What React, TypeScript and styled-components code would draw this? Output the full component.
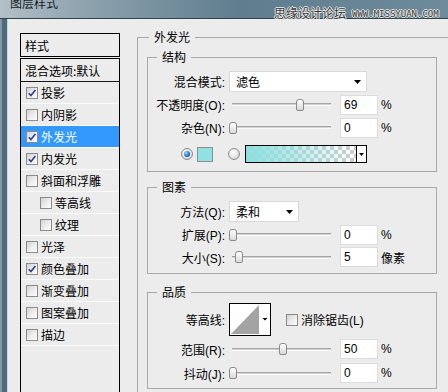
import styled, { createGlobalStyle } from "styled-components";

const GlobalStyle = createGlobalStyle`
  * { box-sizing: border-box; }
  html, body { margin: 0; padding: 0; background: #ececec; }
  body {
    font-family: "Liberation Sans", "Noto Sans CJK SC", sans-serif;
    font-size: 12px;
    color: #000;
  }
`;

const Window = styled.div`
  position: relative;
  width: 448px;
  height: 392px;
  overflow: hidden;
  display: flex;
  flex-direction: column;
  background: #ececec;
`;

const TitleBar = styled.div`
  height: 19px;
  flex-shrink: 0;
  display: flex;
  align-items: flex-start;
  padding-left: 10px;
  border-bottom: 1px solid #33424b;
  background: linear-gradient(
    to right,
    #b3c0c7 0,
    #8fa4af 80px,
    #5f7d8e 240px,
    #6d8b9a 448px
  );
`;

const TitleText = styled.span`
  font-family: "Noto Sans CJK SC", sans-serif;
  font-size: 12px;
  line-height: 12px;
  margin-top: -3px;
  color: #151b1f;
`;

const Watermark = styled.div`
  position: absolute;
  left: 274px;
  top: 6px;
  z-index: 2;
  display: flex;
  align-items: center;
  gap: 6px;
  color: #3a3a3a;
  text-shadow: 1px 0 #e8e8e8, -1px 0 #e8e8e8, 0 1px #e8e8e8, 0 -1px #e8e8e8;
`;

const WatermarkCn = styled.span`
  font-family: "Noto Sans CJK SC", sans-serif;
  font-size: 12px;
  line-height: 14px;
`;

const WatermarkEn = styled.span`
  font-family: "DejaVu Sans Mono", monospace;
  font-size: 9px;
  line-height: 10px;
  margin-top: 2px;
`;

const Body = styled.div`
  flex: 1;
  min-height: 0;
  display: flex;
`;

const FrameEdge = styled.div`
  width: 8px;
  flex-shrink: 0;
  background: linear-gradient(
    to right,
    #8198a4 0 2px,
    #4d6b7f 2px 7px,
    #cfd6da 7px 8px
  );
`;

const Content = styled.div`
  flex: 1;
  display: flex;
  align-items: flex-start;
  padding: 14px 0 0 12px;
`;

/* ---------- left style list ---------- */

const Sidebar = styled.div`
  width: 100px;
  height: 380px;
  flex-shrink: 0;
  display: flex;
  flex-direction: column;
  font-family: "Noto Sans CJK SC", sans-serif;
`;

const SideHeader = styled.div`
  height: 24px;
  margin-bottom: 1px;
  border: 1px solid #000;
  padding-left: 4px;
  display: flex;
  align-items: center;
`;

const StyleList = styled.div`
  flex: 1;
  border: 1px solid #000;
  border-bottom: none;
`;

const BlendRow = styled.div`
  height: 23px;
  padding: 1px 0 0 4px;
  border-bottom: 1px solid #1a1a1a;
  display: flex;
  align-items: center;
`;

const EffectRow = styled.div<{ $selected?: boolean; $sub?: boolean }>`
  height: 22px;
  padding-left: ${(p) => (p.$sub ? 19 : 5)}px;
  border-bottom: 1px solid #fbfbfb;
  display: flex;
  align-items: center;
  gap: 3px;
  background: ${(p) => (p.$selected ? "#3399ff" : "transparent")};
  color: ${(p) => (p.$selected ? "#fff" : "#000")};
`;

const CheckBoxFrame = styled.span`
  width: 12px;
  height: 12px;
  flex-shrink: 0;
  border: 1px solid #8b8b8b;
  background: linear-gradient(135deg, #d2d2d2 0%, #f0f0f0 60%, #fdfdfd 100%);
  display: flex;
  align-items: center;
  justify-content: center;
`;

function CheckBox({ checked }: { checked: boolean }) {
  return (
    <CheckBoxFrame>
      {checked && (
        <svg width="10" height="10" viewBox="0 0 10 10">
          <path
            d="M1.8 5.2 L4 7.6 L8.4 2"
            fill="none"
            stroke="#2f3f93"
            strokeWidth="1.6"
          />
        </svg>
      )}
    </CheckBoxFrame>
  );
}

/* ---------- right panel ---------- */

const Main = styled.div`
  flex-shrink: 0;
  margin: -4px 0 0 17px;
`;

const OuterGroup = styled.fieldset`
  width: 320px;
  margin: 0;
  min-inline-size: 0;
  padding: 4px 0 10px 9px;
  border: 1px solid #a9a9a9;
`;

const OuterLegend = styled.legend`
  margin-left: 2px;
  padding: 0 5px;
  font-family: "Noto Sans CJK SC", sans-serif;
  font-size: 12px;
  line-height: 16px;
`;

const Group = styled.fieldset<{ $top: number; $pt: number; $pb: number }>`
  width: 290px;
  margin: ${(p) => p.$top}px 0 0 0;
  min-inline-size: 0;
  padding: ${(p) => p.$pt}px 0 ${(p) => p.$pb}px 0;
  border: 1px solid #a9a9a9;
`;

const GroupLegend = styled.legend`
  margin-left: 9px;
  padding: 0 5px;
  font-family: "Noto Sans CJK SC", sans-serif;
  font-size: 12px;
  line-height: 16px;
`;

const Row = styled.div<{ $h: number }>`
  height: ${(p) => p.$h}px;
  display: flex;
  align-items: center;
`;

const Label = styled.span`
  width: 77px;
  flex-shrink: 0;
  text-align: right;
  white-space: nowrap;
`;

const SelectBox = styled.div<{ $w: number }>`
  width: ${(p) => p.$w}px;
  height: 21px;
  margin-left: 4px;
  padding: 0 5px 0 6px;
  background: #fff;
  border: 1px solid #d9d9d9;
  display: flex;
  align-items: center;
  justify-content: space-between;
  font-family: "Noto Sans CJK SC", sans-serif;
`;

function Select({ value, width }: { value: string; width: number }) {
  return (
    <SelectBox $w={width}>
      <span>{value}</span>
      <svg width="7" height="4" viewBox="0 0 7 4">
        <path d="M0 0h7L3.5 4z" fill="#000" />
      </svg>
    </SelectBox>
  );
}

const SliderBox = styled.div`
  position: relative;
  width: 105px;
  height: 20px;
  margin-left: 4px;
  flex-shrink: 0;
  display: flex;
  align-items: center;
`;

const Track = styled.div`
  flex: 1;
  margin: 0 3px;
  height: 3px;
  border-top: 1px solid #a3a3a3;
  background: #d2d2d2;
  border-bottom: 1px solid #fafafa;
`;

const Thumb = styled.div`
  position: absolute;
  top: 4px;
  width: 8px;
  height: 12px;
  border: 1px solid #8a8a8a;
  border-radius: 3px 3px 2px 2px;
  background: linear-gradient(#ffffff, #d9d9d9);
`;

function Slider({ pct }: { pct: number }) {
  return (
    <SliderBox>
      <Track />
      <Thumb style={{ left: `${Math.round(pct * 97)}px` }} />
    </SliderBox>
  );
}

const NumberBox = styled.div`
  width: 38px;
  height: 20px;
  margin-left: 6px;
  padding-left: 3px;
  background: #fff;
  border: 1px solid #dcdcdc;
  display: flex;
  align-items: center;
`;

const Unit = styled.span`
  margin-left: 3px;
  white-space: nowrap;
`;

function SliderRow({
  label,
  pct,
  value,
  unit,
  h,
}: {
  label: string;
  pct: number;
  value: string;
  unit: string;
  h: number;
}) {
  return (
    <Row $h={h}>
      <Label>{label}</Label>
      <Slider pct={pct} />
      <NumberBox>{value}</NumberBox>
      <Unit>{unit}</Unit>
    </Row>
  );
}

const ColorRow = styled(Row)`
  padding-left: 33px;
`;

const RadioOuter = styled.span<{ $on?: boolean }>`
  width: 12px;
  height: 12px;
  flex-shrink: 0;
  border-radius: 50%;
  border: 1px solid #8d8d8d;
  background: radial-gradient(circle at 40% 35%, #ffffff 0%, #e6e6e6 50%, #c4c4c4 100%);
  display: flex;
  align-items: center;
  justify-content: center;
  margin-left: ${(p) => (p.$on ? 0 : 15)}px;
`;

const RadioDot = styled.span`
  width: 6px;
  height: 6px;
  border-radius: 50%;
  background: radial-gradient(circle at 35% 35%, #9fdcff 0%, #1777c7 55%, #0b3f75 100%);
`;

const Swatch = styled.span`
  width: 16px;
  height: 15px;
  margin-left: 4px;
  border: 1px solid #8e8e8e;
  background: #90e1e3;
`;

const GradientBar = styled.div`
  width: 122px;
  height: 18px;
  margin-left: 5px;
  border: 1px solid #000;
  display: flex;
`;

const GradientFill = styled.div`
  flex: 1;
  background:
    linear-gradient(to right, #8fdfe0 0%, rgba(143, 223, 224, 0.7) 35%, rgba(143, 223, 224, 0) 100%),
    repeating-conic-gradient(#cdcdcd 0 25%, #ffffff 0 50%) 0 0 / 8px 8px;
`;

const ArrowCell = styled.div`
  width: 10px;
  border-left: 1px solid #000;
  background: #fff;
  display: flex;
  align-items: center;
  justify-content: center;
`;

const ContourBox = styled.div`
  width: 42px;
  height: 33px;
  margin-left: 4px;
  border: 1px solid #000;
  background: #fff;
  display: flex;
`;

const CheckLabel = styled.span`
  display: flex;
  align-items: center;
  gap: 3px;
  margin-left: 15px;
  white-space: nowrap;
`;

const effects = [
  { name: "投影", checked: true },
  { name: "内阴影", checked: false },
  { name: "外发光", checked: true, selected: true },
  { name: "内发光", checked: true },
  { name: "斜面和浮雕", checked: false },
  { name: "等高线", checked: false, sub: true },
  { name: "纹理", checked: false, sub: true },
  { name: "光泽", checked: false },
  { name: "颜色叠加", checked: true },
  { name: "渐变叠加", checked: false },
  { name: "图案叠加", checked: false },
  { name: "描边", checked: false },
];

export default function App() {
  return (
    <>
      <GlobalStyle />
      <Window>
        <TitleBar>
          <TitleText>图层样式</TitleText>
        </TitleBar>
        <Watermark>
          <WatermarkCn>思缘设计论坛</WatermarkCn>
          <WatermarkEn>WWW.MISSYUAN.COM</WatermarkEn>
        </Watermark>
        <Body>
          <FrameEdge />
          <Content>
            <Sidebar>
              <SideHeader>样式</SideHeader>
              <StyleList>
                <BlendRow>混合选项:默认</BlendRow>
                {effects.map((e) => (
                  <EffectRow key={e.name} $selected={e.selected} $sub={e.sub}>
                    <CheckBox checked={e.checked} />
                    {e.name}
                  </EffectRow>
                ))}
              </StyleList>
            </Sidebar>

            <Main>
              <OuterGroup>
                <OuterLegend>外发光</OuterLegend>

                <Group $top={0} $pt={5} $pb={2}>
                  <GroupLegend>结构</GroupLegend>
                  <Row $h={23}>
                    <Label>混合模式:</Label>
                    <Select value="滤色" width={138} />
                  </Row>
                  <SliderRow h={23} label="不透明度(O):" pct={0.69} value="69" unit="%" />
                  <SliderRow h={23} label="杂色(N):" pct={0} value="0" unit="%" />
                  <ColorRow $h={30}>
                    <RadioOuter $on>
                      <RadioDot />
                    </RadioOuter>
                    <Swatch />
                    <RadioOuter />
                    <GradientBar>
                      <GradientFill />
                      <ArrowCell>
                        <svg width="5" height="3" viewBox="0 0 5 3">
                          <path d="M0 0h5L2.5 3z" fill="#000" />
                        </svg>
                      </ArrowCell>
                    </GradientBar>
                  </ColorRow>
                </Group>

                <Group $top={7} $pt={5} $pb={5}>
                  <GroupLegend>图素</GroupLegend>
                  <Row $h={23}>
                    <Label>方法(Q):</Label>
                    <Select value="柔和" width={70} />
                  </Row>
                  <SliderRow h={23} label="扩展(P):" pct={0} value="0" unit="%" />
                  <SliderRow h={22} label="大小(S):" pct={0.06} value="5" unit="像素" />
                </Group>

                <Group $top={10} $pt={2} $pb={3}>
                  <GroupLegend>品质</GroupLegend>
                  <Row $h={35}>
                    <Label>等高线:</Label>
                    <ContourBox>
                      <svg width="40" height="31" viewBox="0 0 40 31">
                        <polygon points="1,30 29,1 29,30" fill="#a3a3a3" />
                        <polygon points="32.5,14 37.5,14 35,16.5" fill="#000" />
                      </svg>
                    </ContourBox>
                    <CheckLabel>
                      <CheckBox checked={false} />
                      消除锯齿(L)
                    </CheckLabel>
                  </Row>
                  <SliderRow h={24} label="范围(R):" pct={0.52} value="50" unit="%" />
                  <SliderRow h={24} label="抖动(J):" pct={0} value="0" unit="%" />
                </Group>
              </OuterGroup>
            </Main>
          </Content>
        </Body>
      </Window>
    </>
  );
}
